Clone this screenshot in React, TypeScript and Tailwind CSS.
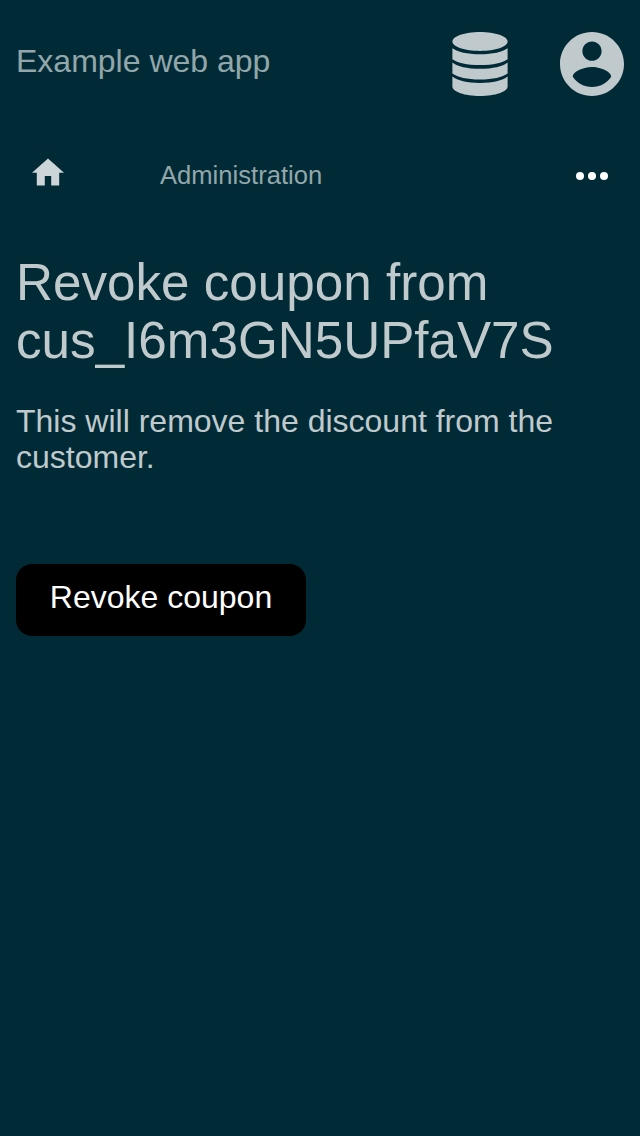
import React from "react";

function DatabaseIcon() {
  return (
    <svg className="h-16 w-16" viewBox="0 0 64 64" fill="currentColor">
      <path d="M32 0C47.3 0 59.6 4.3 59.6 9.6S47.3 19 32 19 4.4 14.9 4.4 9.6 16.7 0 32 0z" />
      <path d="M4.4 16.2C9.5 20 19 22.2 32 22.2S54.5 20 59.6 16.2V27.2C54.5 31 45 33 32 33S9.5 31 4.4 27.2z" />
      <path d="M4.4 30.4C9.5 34.4 19 36.7 32 36.7S54.5 34.4 59.6 30.4V41.5C54.5 45.3 45 47.5 32 47.5S9.5 45.3 4.4 41.5z" />
      <path d="M4.4 44.6C9.5 48.6 19 51 32 51S54.5 48.6 59.6 44.6V54.5C59.6 59.8 47.3 64 32 64S4.4 59.8 4.4 54.5z" />
    </svg>
  );
}

function AccountIcon() {
  return (
    <svg className="h-16 w-16" viewBox="2 2 20 20" fill="currentColor">
      <path d="M12 2C6.48 2 2 6.48 2 12s4.48 10 10 10 10-4.48 10-10S17.52 2 12 2zm0 3c1.66 0 3 1.34 3 3s-1.34 3-3 3-3-1.34-3-3 1.34-3 3-3zm0 14.2c-2.5 0-4.71-1.28-6-3.22.03-1.99 4-3.08 6-3.08 1.99 0 5.97 1.09 6 3.08-1.29 1.94-3.5 3.22-6 3.22z" />
    </svg>
  );
}

function HomeIcon() {
  return (
    <svg className="mb-2 ml-4 h-8 w-8 text-[#ccd5d7]" viewBox="2 1.5 20 20" fill="currentColor">
      <path d="M10 20v-6h4v6h5v-8h3L12 3 2 12h3v8z" />
    </svg>
  );
}

export default function App() {
  return (
    <div className="flex min-h-[1136px] w-full flex-col bg-[#002b36] px-4 font-['Liberation_Sans',Arial,sans-serif] text-[#c0cacd]">
      <header className="flex h-32 items-center justify-between">
        <div className="pb-[6px] text-[32px] leading-[36px] text-[#93a6aa]">Example web app</div>
        <div className="flex items-center gap-12">
          <DatabaseIcon />
          <AccountIcon />
        </div>
      </header>
      <nav className="flex h-24 items-center">
        <HomeIcon />
        <div className="ml-24 pb-[2px] text-[25.6px] leading-[30px] text-[#93a6aa]">Administration</div>
        <svg className="mr-4 ml-auto h-8 w-8" viewBox="0 0 32 32" fill="#fff">
          <circle cx="4" cy="16" r="4" />
          <circle cx="16" cy="16" r="4" />
          <circle cx="28" cy="16" r="4" />
        </svg>
      </nav>
      <h1 className="mt-[30px] text-[51.2px] leading-[58px]">
        Revoke coupon from
        <br />
        cus_I6m3GN5UPfaV7S
      </h1>
      <p className="mt-[33px] text-[32px] leading-[36px]">This will remove the discount from the customer.</p>
      <button className="mt-[89px] h-[72px] w-[290px] rounded-2xl bg-black pb-[7px] text-[32px] leading-[36px] text-white">
        Revoke coupon
      </button>
    </div>
  );
}
